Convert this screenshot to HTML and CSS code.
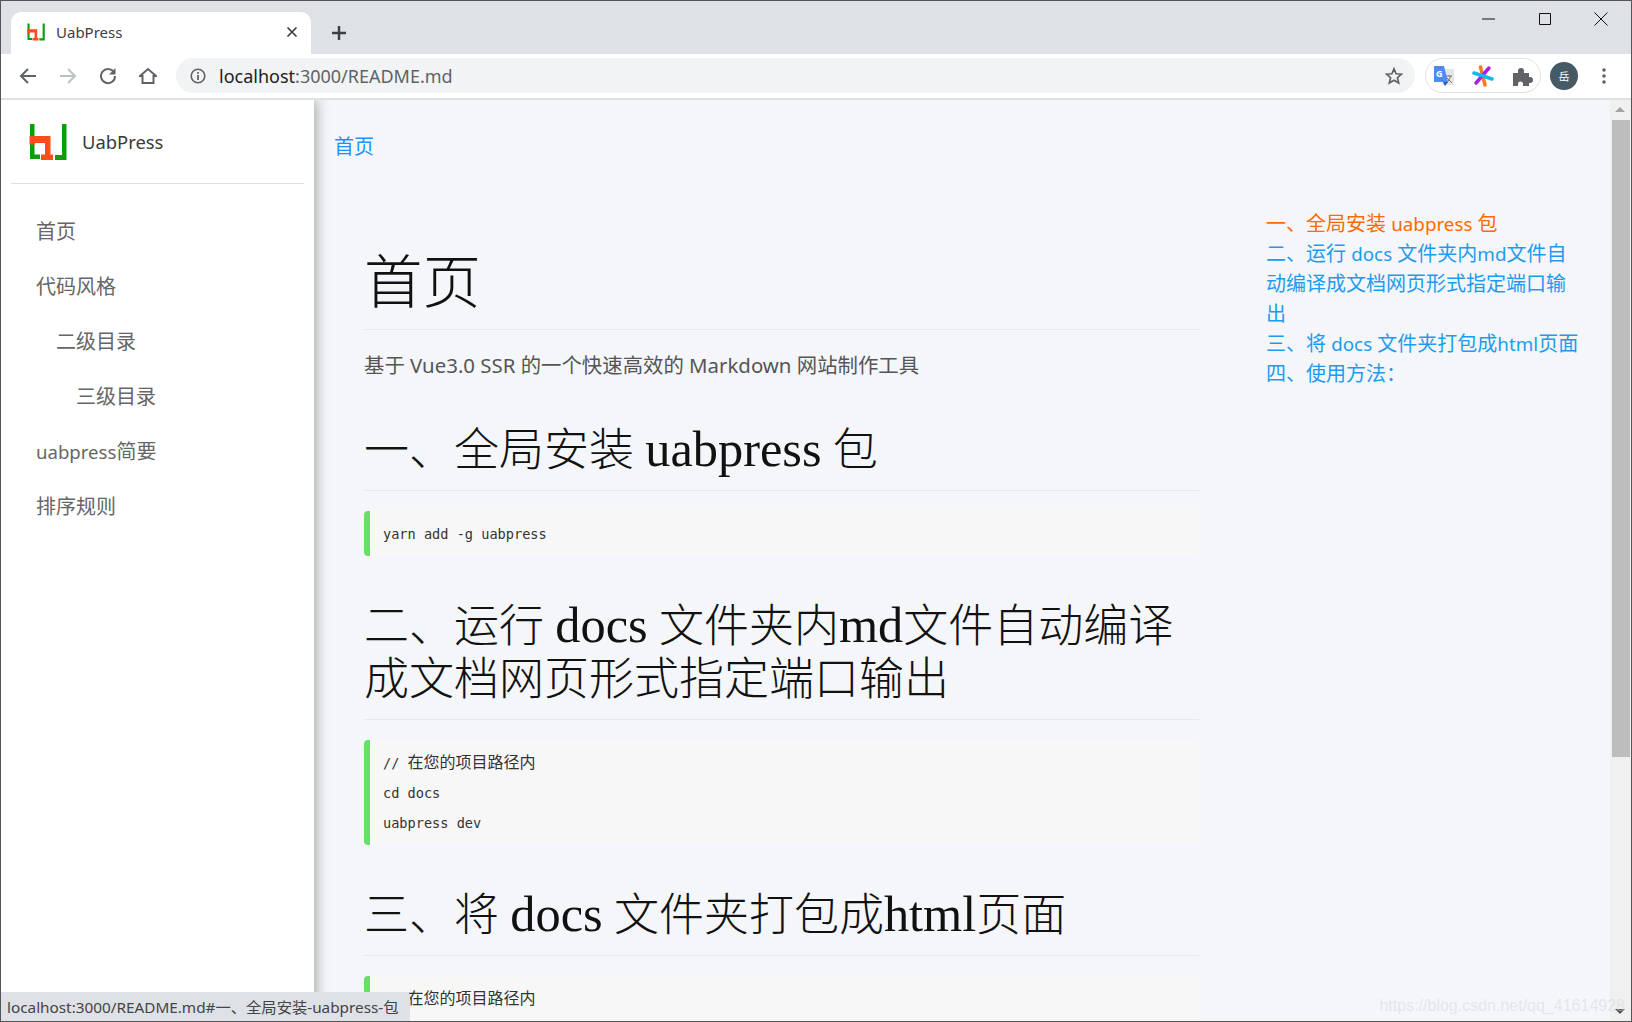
FILE: index.html
```html
<!DOCTYPE html>
<html lang="zh">
<head>
    <meta charset="UTF-8">
    <title>UabPress</title>
    <link rel="stylesheet" href="styles.css">
</head>
<body>
    <div class="window">
        <div class="tabstrip">
            <div class="tab">
                <svg class="tab-logo" viewBox="9 12 38 38"><path d="M10 13h4.500v30.500H20V48H10zM42 13h4.500v36H35v-5h7z" fill="#0a9e0a"/><path d="M9.500 25h21v18.500H33V49H21v-5.500h4V32H15v1.500H9.500z" fill="#ff4d1a"/></svg>
                <span class="tab-title">UabPress</span>
                <svg class="tab-close" viewBox="0 0 12 12"><path d="M1.500 1.500l9 9M10.500 1.500l-9 9" stroke="#3c4043" stroke-width="1.700"/></svg>
            </div>
            <svg class="new-tab" viewBox="0 0 16 16"><path d="M8 1v14M1 8h14" stroke="#3c4043" stroke-width="2.400"/></svg>
            <div class="win-controls">
                <svg viewBox="0 0 14 14"><path d="M0 7h13" stroke="#111" stroke-width="1"/></svg>
                <svg viewBox="0 0 14 14"><path d="M1.500 1.500h11v11h-11z" fill="none" stroke="#111" stroke-width="1"/></svg>
                <svg viewBox="0 0 14 14"><path d="M.5.5l13 13M13.500.5l-13 13" stroke="#111" stroke-width="1"/></svg>
            </div>
        </div>
        <div class="toolbar">
            <svg class="tool" viewBox="0 0 18 18"><path d="M17 9H2M9 2L2 9l7 7" fill="none" stroke="#5f6368" stroke-width="2"/></svg>
            <svg class="tool" viewBox="0 0 18 18"><path d="M1 9h15M9 2l7 7-7 7" fill="none" stroke="#bdc1c6" stroke-width="2"/></svg>
            <svg class="tool" viewBox="0 0 18 18"><path d="M15 5.500A7 7 0 1 0 16 9" fill="none" stroke="#5f6368" stroke-width="2"/><path d="M16.500 1v6.500H10z" fill="#5f6368"/></svg>
            <svg class="tool" viewBox="0 0 18 18"><path d="M1 9l8-7 8 7h-2.500v7H3.500V9z" fill="none" stroke="#5f6368" stroke-width="2"/></svg>
            <div class="omnibox">
                <svg class="info" viewBox="0 0 16 16"><circle cx="8" cy="8" r="6.800" fill="none" stroke="#5f6368" stroke-width="1.600"/><path d="M8 7v5M8 4v1.800" stroke="#5f6368" stroke-width="1.800"/></svg>
                <span class="url"><span class="host">localhost</span>:3000/README.md</span>
                <svg class="star" viewBox="0 0 18 18"><path d="M9 1.800l2.100 5 5.400.4-4.100 3.500 1.300 5.300L9 13.200 4.300 16l1.300-5.300-4.100-3.500 5.400-.4z" fill="none" stroke="#5f6368" stroke-width="1.700"/></svg>
            </div>
            <div class="ext-pill">
                <svg class="ext" viewBox="0 0 22 22"><path d="M9 4h12v16H9z" fill="#e3e5e6"/><path d="M13 11h6M16 10v1M14 18l4-7M14 13l5 5" stroke="#777" stroke-width="1"/><path d="M1 1h10l4 16H1z" fill="#4d8bf5"/><path d="M10 17h5l-3 4z" fill="#2a56c6"/><text x="3" y="12" class="g">G</text></svg>
                <svg class="ext" viewBox="0 0 22 22"><path d="M8.500 2l4.500 18" stroke="#ff7a1a" stroke-width="3.500" stroke-linecap="round"/><path d="M4 18L17 3" stroke="#a81ef0" stroke-width="3.500" stroke-linecap="round"/><path d="M2 8l18 6" stroke="#18b8e6" stroke-width="3.500" stroke-linecap="round"/></svg>
                <svg class="ext" viewBox="0 0 22 22"><path d="M2 8h5V6a3 3 0 0 1 6 0v2h5v4h1a3 3 0 0 1 0 6h-1v3H12v-2a2.500 2.500 0 0 0-5 0v2H2z" fill="#5f6368"/></svg>
            </div>
            <div class="avatar">岳</div>
            <svg class="menu-dots" viewBox="0 0 4 18"><circle cx="2" cy="3" r="1.800" fill="#5f6368"/><circle cx="2" cy="9" r="1.800" fill="#5f6368"/><circle cx="2" cy="15" r="1.800" fill="#5f6368"/></svg>
        </div>
        <div class="page">
            <aside class="sidebar">
                <div class="brand">
                    <svg class="brand-logo" viewBox="9 12 38 38"><path d="M10 13h4.500v30.500H20V48H10zM42 13h4.500v36H35v-5h7z" fill="#0a9e0a"/><path d="M9.500 25h21v18.500H33V49H21v-5.500h4V32H15v1.500H9.500z" fill="#ff4d1a"/></svg>
                    <span>UabPress</span>
                </div>
                <nav class="nav">
                    <a>首页</a>
                    <a>代码风格</a>
                    <a class="level2">二级目录</a>
                    <a class="level3">三级目录</a>
                    <a><span class="lat">uabpress</span>简要</a>
                    <a>排序规则</a>
                </nav>
            </aside>
            <main class="content">
                <div class="breadcrumb"><a>首页</a></div>
                <div class="columns">
                    <article class="article">
                        <h1>首页</h1>
                        <p>基于 Vue3.0 SSR 的一个快速高效的 Markdown 网站制作工具</p>
                        <h2>一、全局安装 <span class="lat">uabpress</span> 包</h2>
                        <pre class="code">yarn add -g uabpress</pre>
                        <h2>二、运行 <span class="lat">docs</span> 文件夹内<span class="lat">md</span>文件自动编译成文档网页形式指定端口输出</h2>
                        <pre class="code">// <span class="cjk">在您的项目路径内</span>
cd docs
uabpress dev</pre>
                        <h2>三、将 <span class="lat">docs</span> 文件夹打包成<span class="lat">html</span>页面</h2>
                        <pre class="code">// <span class="cjk">在您的项目路径内</span>
cd docs
uabpress build</pre>
                    </article>
                    <ul class="toc">
                        <li class="current">一、全局安装 <span class="lat">uabpress</span> 包</li>
                        <li>二、运行 <span class="lat">docs</span> 文件夹内<span class="lat">md</span>文件自动编译成文档网页形式指定端口输出</li>
                        <li>三、将 <span class="lat">docs</span> 文件夹打包成<span class="lat">html</span>页面</li>
                        <li>四、使用方法：</li>
                    </ul>
                </div>
            </main>
            <div class="scrollbar">
                <span class="arrow-up"></span>
                <div class="thumb"></div>
                <span class="arrow-down"></span>
            </div>
        </div>
        <div class="status">localhost:3000/README.md#一、全局安装-uabpress-包</div>
        <div class="watermark">https://blog.csdn.net/qq_41614928</div>
    </div>
</body>
</html>
```

FILE: styles.css
```css
* {
    box-sizing: border-box;
}
html, body {
    margin: 0;
    height: 100%;
    overflow: hidden;
}
body {
    font-family: "Noto Sans", "Noto Sans CJK SC", sans-serif;
}
.window {
    position: relative;
    display: flex;
    flex-direction: column;
    height: 1022px;
    border: 1px solid #555;
    overflow: hidden;
}

/* browser chrome */
.tabstrip {
    display: flex;
    align-items: flex-end;
    height: 53px;
    padding-left: 10px;
    background: #dee1e6;
}
.tab {
    display: flex;
    align-items: center;
    width: 300px;
    height: 42px;
    padding: 0 13px 2px 16px;
    background: #fff;
    border-radius: 10px 10px 0 0;
}
.tab-logo {
    width: 18px;
    height: 18px;
}
.tab-title {
    flex: 1;
    margin-left: 11px;
    font-size: 15px;
    color: #3c4043;
}
.tab-close {
    width: 12px;
    height: 12px;
}
.new-tab {
    width: 16px;
    height: 16px;
    margin: 0 0 13px 20px;
}
.win-controls {
    display: flex;
    gap: 42px;
    align-self: flex-start;
    margin: 11px 23px 0 auto;
}
.win-controls svg {
    width: 14px;
    height: 14px;
}
.toolbar {
    display: flex;
    align-items: center;
    height: 46px;
    padding: 0 25px 1px 18px;
    background: #fff;
    border-bottom: 2px solid #dfe1e5;
}
.tool {
    width: 18px;
    height: 18px;
    margin-right: 22px;
}
.omnibox {
    display: flex;
    align-items: center;
    flex: 1;
    height: 35px;
    margin-left: -3px;
    padding: 0 12px 0 14px;
    background: #f1f3f4;
    border-radius: 18px;
}
.info {
    width: 16px;
    height: 16px;
}
.url {
    flex: 1;
    margin-left: 13px;
    font-size: 18px;
    color: #5f6368;
}
.host {
    color: #202124;
}
.star {
    width: 18px;
    height: 18px;
}
.ext-pill {
    display: flex;
    align-items: center;
    gap: 17px;
    height: 35px;
    margin-left: 10px;
    padding: 0 7px;
    border: 1px solid #dfe1e5;
    border-radius: 18px;
}
.ext {
    width: 22px;
    height: 22px;
}
.g {
    font-size: 9px;
    font-weight: 700;
    fill: #fff;
}
.avatar {
    display: flex;
    align-items: center;
    justify-content: center;
    width: 28px;
    height: 28px;
    margin-left: 9px;
    border-radius: 50%;
    background: #455a64;
    color: #fff;
    font-size: 11px;
}
.menu-dots {
    width: 4px;
    height: 18px;
    margin-left: 24px;
}

/* page */
.page {
    display: flex;
    flex: 1;
    min-height: 0;
    overflow: hidden;
    background: #f4f6fa;
}
.sidebar {
    flex: none;
    width: 313px;
    background: #fff;
    box-shadow: 3px 0 12px rgba(0, 0, 0, 0.3);
    z-index: 1;
}
.brand {
    display: flex;
    align-items: center;
    height: 84px;
    margin: 0 10px;
    padding: 0 0 0 18px;
    border-bottom: 1px solid #e0e0e0;
    font-size: 18.400px;
    color: #3a3a3a;
}
.brand-logo {
    width: 38px;
    height: 38px;
    margin-right: 15px;
}
.nav {
    display: flex;
    flex-direction: column;
    padding-top: 19.500px;
}
.nav a {
    height: 55px;
    line-height: 55px;
    padding-left: 35px;
    font-size: 20px;
    color: #666;
}
.nav .level2 {
    padding-left: 55px;
}
.nav .level3 {
    padding-left: 75px;
}
.nav .lat {
    font-size: 18.600px;
}
.toc .lat {
    font-size: 18.800px;
}
.content {
    flex: 1;
    min-width: 0;
    overflow: hidden;
    padding: 0 0 0 20px;
}
.breadcrumb {
    padding-top: 31px;
    height: 76px;
    font-size: 20px;
    color: #1e90ff;
}
.columns {
    display: flex;
}
.article {
    flex: none;
    width: 835px;
    margin-left: 30px;
    padding-top: 73px;
}
.article h1, .article h2 {
    margin: 0;
    font-family: "Liberation Serif", "Noto Sans CJK SC", serif;
    font-weight: 300;
    color: #111;
    border-bottom: 1px solid #e6e8ec;
}
.article h1 {
    height: 81px;
    font-size: 58.500px;
    line-height: 70px;
}
.article p {
    margin: 0;
    padding-top: 21px;
    font-size: 20.400px;
    line-height: 28px;
    color: #555;
}
.article h2 {
    margin-top: 45px;
    padding-bottom: 12px;
    font-size: 45px;
    line-height: 53px;
}
.article h2 .lat {
    font-size: 50.400px;
    line-height: 1;
}
.code {
    margin: 20px 0 0;
    padding: 7.500px 14px 7.500px 13px;
    background: #f7f7f8;
    border-left: 6px solid #68e068;
    border-radius: 4px;
    font-family: "DejaVu Sans Mono", "Noto Sans CJK SC", monospace;
    font-size: 13.600px;
    line-height: 30px;
    color: #333;
}
.code + h2 {
    margin-top: 44px;
}
.code .cjk {
    font-family: "Noto Sans CJK SC", sans-serif;
    font-size: 16px;
    line-height: 1;
}
.toc {
    flex: none;
    width: 316px;
    margin: 33px 0 0 67px;
    padding: 0;
    list-style: none;
    font-size: 20px;
    line-height: 30px;
    color: #1e9bf0;
}
.toc .current {
    color: #ff6a00;
}
.scrollbar {
    position: relative;
    flex: none;
    width: 21px;
    padding: 20px 1px 0 2px;
    background: #f0f0f0;
    z-index: 2;
}
.thumb {
    height: 637px;
    background: #bdbdbd;
}
.arrow-up, .arrow-down {
    position: absolute;
    left: 5px;
    border: 5px solid transparent;
}
.arrow-up {
    top: 2px;
    border-bottom-color: #a3a3a3;
}
.arrow-down {
    bottom: 2px;
    border-top-color: #505050;
}
.status {
    position: absolute;
    left: 0;
    bottom: 0;
    z-index: 3;
    height: 29px;
    padding: 2px 11px 0 6px;
    line-height: 27px;
    font-size: 15.300px;
    color: #444;
    background: #dee1e6;
    border-top-right-radius: 4px;
}
.watermark {
    position: absolute;
    right: 6px;
    bottom: 6px;
    z-index: 3;
    font-family: "Liberation Sans", sans-serif;
    font-size: 16px;
    color: rgba(215, 215, 220, 0.55);
}
```
